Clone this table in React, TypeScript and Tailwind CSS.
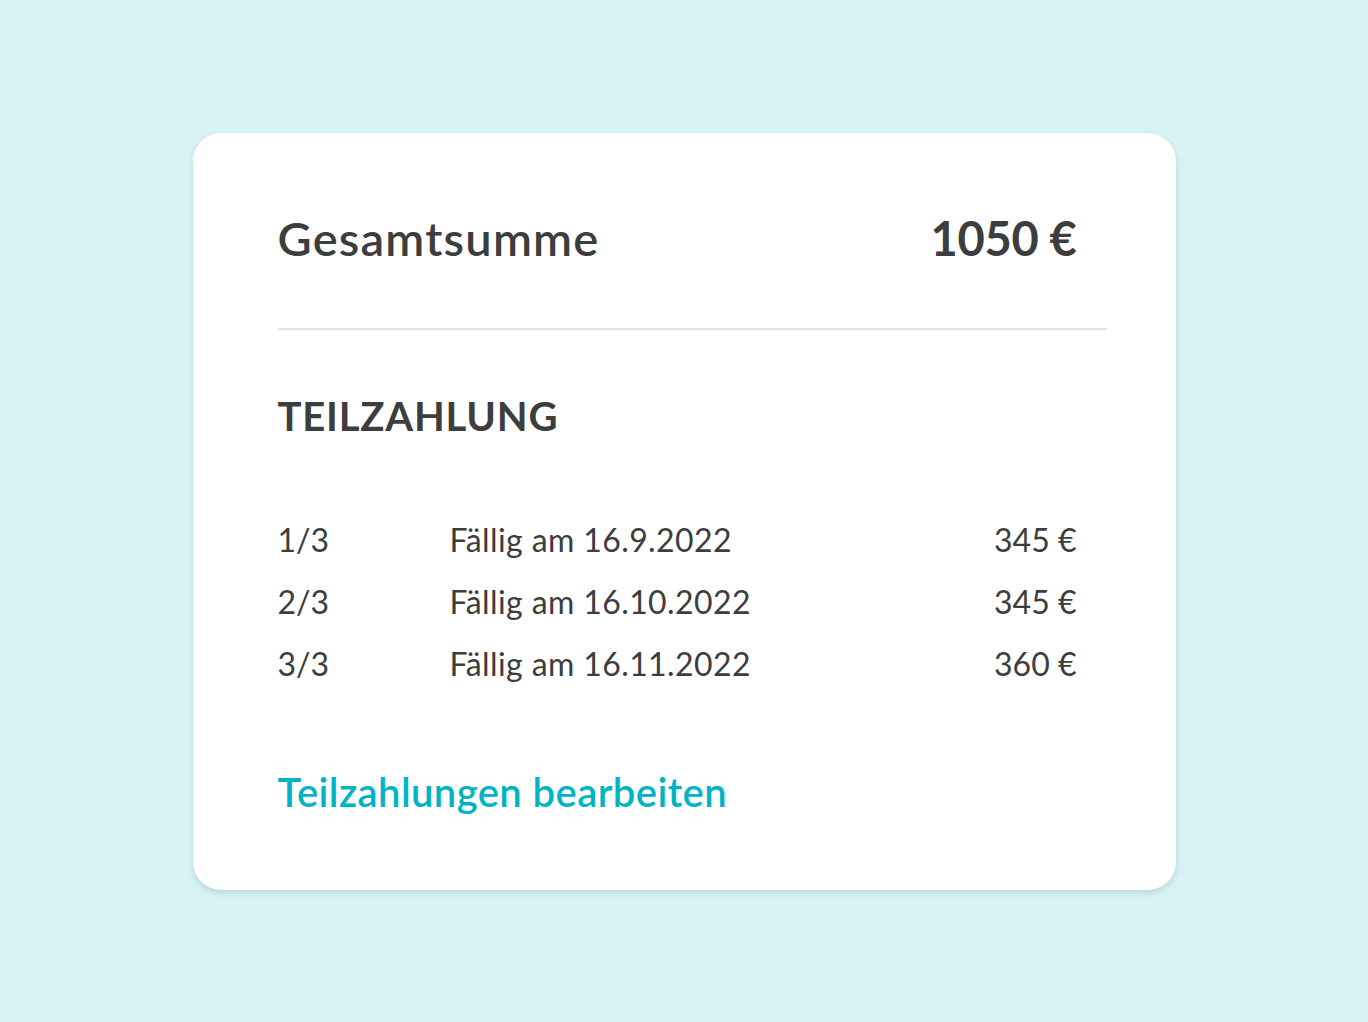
import React from "react";

const rows = [
  { n: "1/3", date: "Fällig am 16.9.2022", amount: "345 €" },
  { n: "2/3", date: "Fällig am 16.10.2022", amount: "345 €" },
  { n: "3/3", date: "Fällig am 16.11.2022", amount: "360 €" },
];

export default function App() {
  return (
    <div
      className="flex h-screen w-full items-center justify-center bg-[#d9f2f5] text-[#3c3d3d]"
      style={{ fontFamily: "Lato, 'Noto Sans', sans-serif" }}
    >
      <div className="h-[757px] w-[983px] rounded-[28px] bg-white pl-[85px] pr-[69px] pt-[82px] shadow-[0_3px_6px_rgba(80,140,150,0.25)]">
        {/* Total */}
        <div className="flex items-center justify-between pr-[30px] text-[47px] leading-[47px]">
          <span className="font-semibold tracking-[1.2px]">Gesamtsumme</span>
          <span className="font-bold tracking-[-0.3px]">1050 €</span>
        </div>
        <div className="mt-[66px] h-[2px] bg-[#e3e3e3]" />

        {/* Installments */}
        <h2 className="mt-[66px] text-[40px] font-bold leading-[40px] tracking-[0.02em]">
          TEILZAHLUNG
        </h2>
        <div className="mt-[88px] flex flex-col gap-[30px] pr-[30px]">
          {rows.map((r) => (
            <div
              key={r.n}
              className="grid grid-cols-[172px_1fr_auto] text-[32px] leading-[32px]"
            >
              <span>{r.n}</span>
              <span className="tracking-[0.4px]">{r.date}</span>
              <span>{r.amount}</span>
            </div>
          ))}
        </div>

        <a
          href="#"
          className="mt-[92px] inline-block text-[40px] font-semibold leading-[40px] tracking-[0.4px] text-[#00b4c5]"
        >
          Teilzahlungen bearbeiten
        </a>
      </div>
    </div>
  );
}
